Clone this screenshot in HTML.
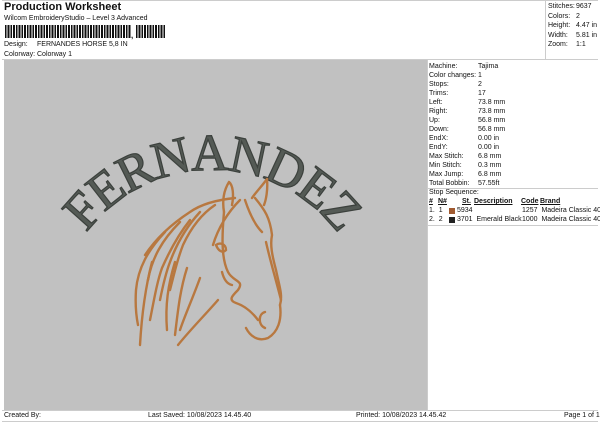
<!DOCTYPE html>
<html><head><meta charset="utf-8"><style>
*{margin:0;padding:0;box-sizing:border-box}
body{width:600px;height:424px;background:#fff;font-family:"Liberation Sans",sans-serif;color:#111;position:relative;overflow:hidden;font-size:7px}
.a{position:absolute;white-space:nowrap}
.bc{position:absolute;left:5px;top:25px;width:126px;height:13px;background:repeating-linear-gradient(90deg,#111 0 1.5px,#fff 1.5px 2.5px,#111 2.5px 4.5px,#fff 4.5px 5.5px)}
.bc2{position:absolute;left:136px;top:25px;width:30px;height:13px;background:repeating-linear-gradient(90deg,#111 0 1.5px,#fff 1.5px 2.5px,#111 2.5px 4.5px,#fff 4.5px 5.5px)}
</style></head><body>
<div class="a" style="left:4px;top:1px;font-size:11px;font-weight:bold">Production Worksheet</div>
<div class="a" style="left:4px;top:15px">Wilcom EmbroideryStudio – Level 3 Advanced</div>
<div class="bc"></div><div class="a" style="left:131px;top:31px;font-size:8px;font-weight:bold">,</div><div class="bc2"></div>
<div class="a" style="left:4px;top:41px">Design:</div><div class="a" style="left:37px;top:41px">FERNANDES HORSE 5,8 IN</div>
<div class="a" style="left:4px;top:51px">Colorway:</div><div class="a" style="left:37px;top:51px">Colorway 1</div>
<div class="a" style="left:2px;top:0;width:596px;height:1px;background:#ccc"></div>
<div class="a" style="left:545px;top:0;width:1px;height:59px;background:#ccc"></div>
<div class="a" style="left:2px;top:59px;width:596px;height:1px;background:#ccc"></div>
<div class="a" style="left:548px;top:2px;line-height:9.6px">Stitches:<br>Colors:<br>Height:<br>Width:<br>Zoom:</div>
<div class="a" style="left:576px;top:2px;line-height:9.6px">9637<br>2<br>4.47 in<br>5.81 in<br>1:1</div>
<div class="a" style="left:4px;top:60px;width:423px;height:350px;background:#c1c1c1"></div>
<div class="a" style="left:427px;top:60px;width:1px;height:350px;background:#ccc"></div>
<svg class="a" style="left:0;top:0" width="430" height="410">
<path id="arc2" d="M 55 327 A 157 157 0 0 1 369 327" fill="none"/>
<text font-family="Liberation Serif,serif" font-size="52" fill="#545a55" stroke="#3c413d" stroke-width="1.2" letter-spacing="-2"><textPath href="#arc2" startOffset="50%" text-anchor="middle">FERNANDEZ</textPath></text>
<g fill="none" stroke="#b87840" stroke-width="2.4" stroke-linecap="round">
<path d="M229 182 C224 190 222 200 224 212 M229 182 C233 185 234 195 232 205"/>
<path d="M267 179 C262 186 256 192 252 198 M267 179 C268 190 266 200 264 205"/>
<path d="M224 212 C222 235 221 258 228 272 C233 282 245 280 238 290 C232 296 228 300 236 303 C245 306 252 312 258 320"/>
<path d="M255 198 C265 210 270 218 272 235 C270 245 272 255 276 270 C279 285 283 295 280 305"/>
<path d="M266 242 C270 260 276 280 281 300"/>
<path d="M280 305 C282 320 278 332 268 338 C258 342 250 336 246 328"/>
<path d="M265 312 C258 314 258 325 265 328"/>
<path d="M216 245 C220 242 226 244 226 250 C222 254 218 250 216 245"/>
<path d="M222 272 C224 280 227 284 232 285"/>
<path d="M235 198 C215 200 200 205 190 212 C170 225 155 240 145 255"/>
<path d="M215 205 C200 215 190 230 183 245 C178 258 175 270 170 290"/>
<path d="M240 200 C228 212 218 228 213 245"/>
<path d="M200 212 C188 225 178 240 170 262 C165 275 162 290 160 300"/>
<path d="M190 220 C178 235 170 250 162 268 C157 282 154 300 150 320"/>
<path d="M180 222 C162 240 152 258 148 280"/>
<path d="M165 232 C148 250 138 268 136 290 C135 305 136 315 138 325"/>
<path d="M152 262 C146 285 142 310 140 345"/>
<path d="M175 262 C168 285 165 305 167 330"/>
<path d="M187 268 C180 290 178 310 175 335"/>
<path d="M200 278 C192 300 185 315 180 330"/>
<path d="M218 300 C205 315 190 330 178 345"/>
<path d="M245 200 C250 215 255 225 262 232"/>
</g>
</svg>
<div class="a" style="left:429px;top:62px;line-height:9px">Machine:<br>Color changes:<br>Stops:<br>Trims:<br>Left:<br>Right:<br>Up:<br>Down:<br>EndX:<br>EndY:<br>Max Stitch:<br>Min Stitch:<br>Max Jump:<br>Total Bobbin:</div>
<div class="a" style="left:478px;top:62px;line-height:9px">Tajima<br>1<br>2<br>17<br>73.8 mm<br>73.8 mm<br>56.8 mm<br>56.8 mm<br>0.00 in<br>0.00 in<br>6.8 mm<br>0.3 mm<br>6.8 mm<br>57.55ft</div>
<div class="a" style="left:428px;top:188px;width:170px;height:1px;background:#ccc"></div>
<div class="a" style="left:429px;top:189px">Stop Sequence:</div>
<div class="a" style="left:429px;top:198px;font-weight:bold;text-decoration:underline">#</div>
<div class="a" style="left:438px;top:198px;font-weight:bold;text-decoration:underline">N#</div>
<div class="a" style="left:462px;top:198px;font-weight:bold;text-decoration:underline">St.</div>
<div class="a" style="left:474px;top:198px;font-weight:bold;text-decoration:underline">Description</div>
<div class="a" style="left:521px;top:198px;font-weight:bold;text-decoration:underline">Code</div>
<div class="a" style="left:540px;top:198px;font-weight:bold;text-decoration:underline">Brand</div>
<div class="a" style="left:429px;top:207px">1.&nbsp; 1</div><div class="a" style="left:449px;top:208px;width:6px;height:6px;background:#a05a30"></div><div class="a" style="left:457px;top:207px">5934</div><div class="a" style="left:522px;top:207px">1257&nbsp; Madeira Classic 40</div>
<div class="a" style="left:429px;top:216px">2.&nbsp; 2</div><div class="a" style="left:449px;top:217px;width:6px;height:6px;background:#222"></div><div class="a" style="left:457px;top:216px">3701&nbsp; Emerald Black</div><div class="a" style="left:522px;top:216px">1000&nbsp; Madeira Classic 40</div>
<div class="a" style="left:428px;top:225px;width:170px;height:1px;background:#ccc"></div>
<div class="a" style="left:2px;top:410px;width:596px;height:1px;background:#ccc"></div>
<div class="a" style="left:2px;top:421px;width:596px;height:1px;background:#ccc"></div>
<div class="a" style="left:4px;top:412px">Created By:</div>
<div class="a" style="left:148px;top:412px">Last Saved: 10/08/2023 14.45.40</div>
<div class="a" style="left:356px;top:412px">Printed: 10/08/2023 14.45.42</div>
<div class="a" style="left:564px;top:412px">Page 1 of 1</div>
</body></html>
